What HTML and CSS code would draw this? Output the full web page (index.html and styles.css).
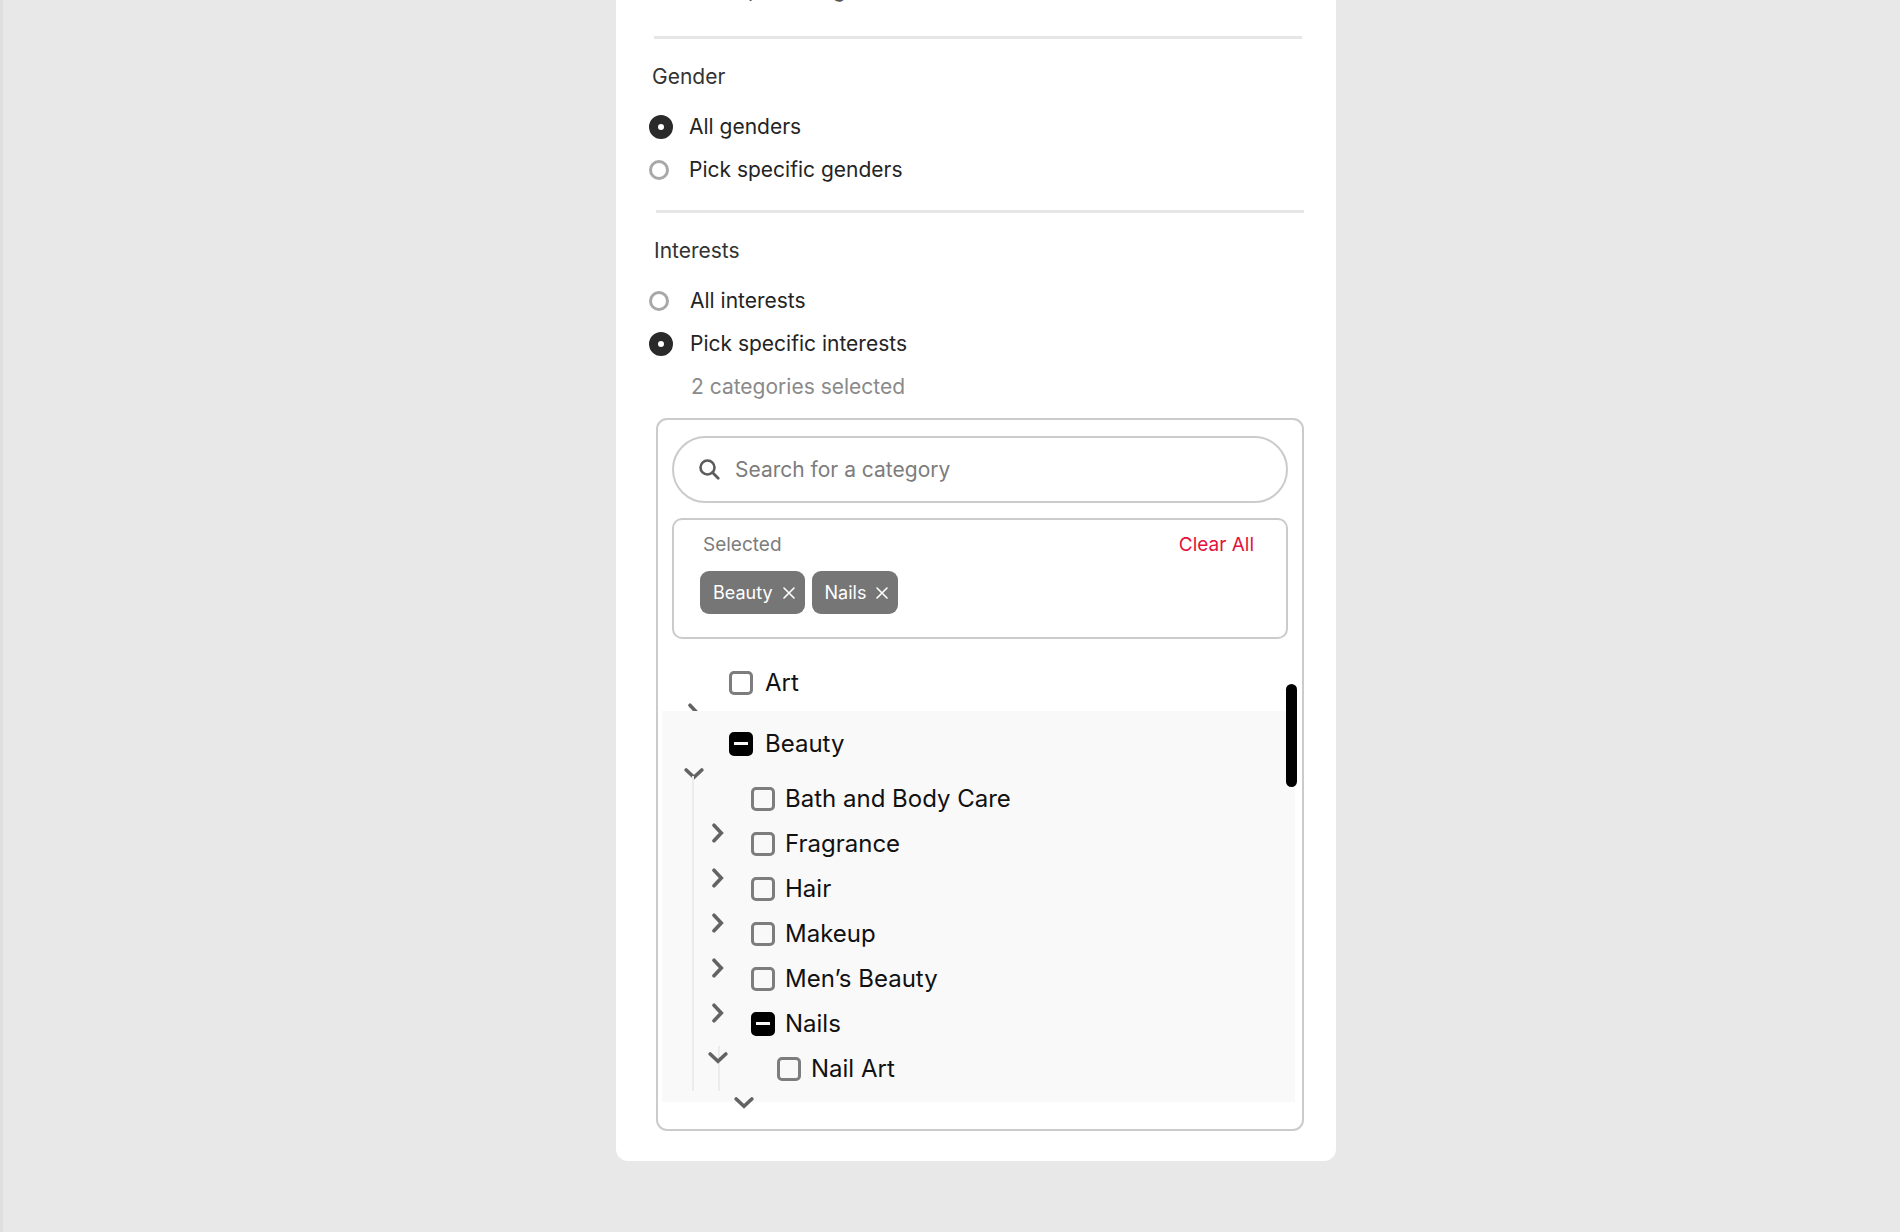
FILE: index.html
```html
<!DOCTYPE html>
<html lang="en">
<head>
<meta charset="utf-8">
<meta name="viewport" content="width=device-width, initial-scale=1">
<title>Audience targeting</title>
<link rel="stylesheet" href="styles.css">
</head>
<body>
<svg class="sprite" aria-hidden="true">
  <symbol id="chevron" viewBox="0 0 20 20"><path d="M6 2.200l7.300 7.800L6 17.800" fill="none" stroke="currentColor" stroke-width="3.600" stroke-linecap="round" stroke-linejoin="miter"/></symbol>
  <symbol id="close" viewBox="0 0 12 12"><path d="M1 1l10 10M11 1L1 11" fill="none" stroke="currentColor" stroke-width="1.600" stroke-linecap="round"/></symbol>
</svg>
<main class="card">
  <p class="clipped-option">Pick specific ages</p>

  <section class="group group-gender">
    <h2 class="group-title">Gender</h2>
    <label class="option"><input class="radio" type="radio" name="gender" checked><span>All genders</span></label>
    <label class="option"><input class="radio" type="radio" name="gender"><span>Pick specific genders</span></label>
  </section>

  <section class="group">
    <h2 class="group-title">Interests</h2>
    <label class="option"><input class="radio" type="radio" name="interests"><span>All interests</span></label>
    <label class="option"><input class="radio" type="radio" name="interests" checked><span>Pick specific interests</span></label>
    <p class="option option-note">2 categories selected</p>
  </section>

  <div class="picker">
    <label class="search">
      <svg class="search-icon" viewBox="0 0 21 21" aria-hidden="true"><circle cx="8.500" cy="8.500" r="7" fill="none" stroke="currentColor" stroke-width="2.600"/><path d="M13.500 13.500l5.700 5.700" stroke="currentColor" stroke-width="2.800" stroke-linecap="round"/></svg>
      <input class="search-input" type="text" placeholder="Search for a category" aria-label="Search for a category">
    </label>

    <div class="selected">
      <div class="selected-head">
        <span>Selected</span>
        <button class="clear" type="button">Clear All</button>
      </div>
      <div class="chips">
        <button class="chip" type="button">Beauty<svg class="chip-close" aria-hidden="true"><use href="#close"/></svg></button>
        <button class="chip" type="button">Nails<svg class="chip-close" aria-hidden="true"><use href="#close"/></svg></button>
      </div>
    </div>

    <ul class="tree">
      <li>
        <div class="row row-top">
          <button class="toggle" type="button" aria-label="Expand Art"><svg class="chevron"><use href="#chevron"/></svg></button>
          <label class="check-label"><input class="check" type="checkbox"><span>Art</span></label>
        </div>
      </li>
      <li class="open-branch">
        <div class="row row-top row-parent">
          <button class="toggle" type="button" aria-label="Collapse Beauty"><svg class="chevron down"><use href="#chevron"/></svg></button>
          <label class="check-label"><input class="check mixed" type="checkbox" aria-checked="mixed"><span>Beauty</span></label>
        </div>
        <ul class="branch">
          <li class="row">
            <button class="toggle" type="button" aria-label="Expand Bath and Body Care"><svg class="chevron"><use href="#chevron"/></svg></button>
            <label class="check-label"><input class="check" type="checkbox"><span>Bath and Body Care</span></label>
          </li>
          <li class="row">
            <button class="toggle" type="button" aria-label="Expand Fragrance"><svg class="chevron"><use href="#chevron"/></svg></button>
            <label class="check-label"><input class="check" type="checkbox"><span>Fragrance</span></label>
          </li>
          <li class="row">
            <button class="toggle" type="button" aria-label="Expand Hair"><svg class="chevron"><use href="#chevron"/></svg></button>
            <label class="check-label"><input class="check" type="checkbox"><span>Hair</span></label>
          </li>
          <li class="row">
            <button class="toggle" type="button" aria-label="Expand Makeup"><svg class="chevron"><use href="#chevron"/></svg></button>
            <label class="check-label"><input class="check" type="checkbox"><span>Makeup</span></label>
          </li>
          <li class="row">
            <button class="toggle" type="button" aria-label="Expand Men’s Beauty"><svg class="chevron"><use href="#chevron"/></svg></button>
            <label class="check-label"><input class="check" type="checkbox"><span>Men’s Beauty</span></label>
          </li>
          <li>
            <div class="row">
              <button class="toggle" type="button" aria-label="Collapse Nails"><svg class="chevron down"><use href="#chevron"/></svg></button>
              <label class="check-label"><input class="check mixed" type="checkbox" aria-checked="mixed"><span>Nails</span></label>
            </div>
            <ul class="branch-inner">
              <li class="row row-leaf">
                <button class="toggle" type="button" aria-label="Collapse Nail Art"><svg class="chevron down"><use href="#chevron"/></svg></button>
                <label class="check-label"><input class="check" type="checkbox"><span>Nail Art</span></label>
              </li>
            </ul>
          </li>
        </ul>
      </li>
    </ul>
    <div class="scroll-thumb"></div>
  </div>
</main>
</body>
</html>
```
FILE: styles.css
```css
* { box-sizing: border-box; }

html { background: #e8e8e8; overflow-x: hidden; }

body {
  margin: 0;
  min-height: 100vh;
  padding: 0 0 48px 49px;
  border-left: 3px solid #dedede;
  overflow: hidden;
  background: #e8e8e8;
  color: #242424;
  font-family: Inter, "Liberation Sans", sans-serif;
  font-size: 21px;
  line-height: 24px;
}

h2, p, ul { margin: 0; padding: 0; }
ul { list-style: none; }

button, input { font: inherit; color: inherit; }
button { border: 0; padding: 0; background: none; cursor: pointer; }

.sprite { position: absolute; width: 0; height: 0; }

.card {
  display: flex;
  flex-direction: column;
  width: 100%;
  max-width: 720px;
  margin: 0 auto;
  padding: 0 32px 30px 40px;
  border-radius: 0 0 12px 12px;
  background: #fff;
}

.clipped-option {
  margin: -22px 0 34px;
  padding-left: 33px;
  color: #555;
}

/* Radio groups */
.group {
  display: flex;
  flex-direction: column;
  padding-top: 26px;
  border-top: 3px solid #e6e6e6;
}

.group-gender { margin: 0 2px 19px -2px; }
.group-gender .option { margin-left: -5px; }

.group-title {
  margin-bottom: 16px;
  margin-left: -2px;
  font-size: 21px;
  font-weight: 400;
  color: #333;
}

.option {
  display: flex;
  align-items: center;
  min-height: 43px;
  margin-left: -7px;
}

.option span { margin-left: 21px; }
.option .radio:checked + span { margin-left: 17px; }
.group-gender .option span { margin-left: 20px; }
.group-gender .option .radio:checked + span { margin-left: 16px; }

.option-note { padding-left: 42px; color: #8a8a8a; }

.radio {
  appearance: none;
  flex: none;
  width: 20px;
  height: 20px;
  margin: 0;
  border: 3px solid #a8a8a8;
  border-radius: 50%;
  background: #fff;
}

.radio:checked {
  width: 24px;
  height: 24px;
  border: 9px solid #2a2a2a;
}

/* Category picker */
.picker {
  position: relative;
  display: flex;
  flex-direction: column;
  gap: 15px;
  margin-top: 10px;
  padding: 16px 14px 27px;
  border: 2px solid #cbcbcb;
  border-radius: 11px;
}

.search {
  display: flex;
  align-items: center;
  gap: 15px;
  height: 67px;
  padding: 0 25px;
  border: 2px solid #cbcbcb;
  border-radius: 34px;
}

.search-icon { flex: none; width: 21px; height: 21px; color: #5c5c5c; }

.search-input {
  flex: 1;
  min-width: 0;
  padding: 0;
  border: 0;
  outline: 0;
  background: none;
}

.search-input::placeholder { color: #7c7c7c; opacity: 1; }

.selected {
  display: flex;
  flex-direction: column;
  gap: 14px;
  padding: 13px 32px 23px 26px;
  border: 2px solid #cbcbcb;
  border-radius: 10px;
}

.selected-head {
  display: flex;
  justify-content: space-between;
  padding-left: 3px;
  font-size: 19px;
  color: #7c7c7c;
}

.clear { color: #e3123c; }

.chips { display: flex; flex-wrap: wrap; gap: 7px; }

.chip {
  display: flex;
  align-items: center;
  gap: 10px;
  height: 43px;
  padding: 0 10px 0 13px;
  border-radius: 9px;
  background: #767676;
  color: #fff;
  font-size: 18px;
}

.chip-close { width: 12px; height: 12px; }

/* Category tree */
.tree {
  margin: 0 -7px 0 -10px;
  font-size: 24px;
  color: #111;
}

.row {
  display: flex;
  align-items: center;
  gap: 23px;
  height: 45px;
  padding-left: 46px;
}

.row-top { gap: 25px; height: 57px; padding-left: 22px; }
.row-parent { height: 65px; }
.row-leaf { padding-left: 72px; }

/* Expanders hang below the line they belong to */
.toggle {
  flex: none;
  width: 20px;
  height: 20px;
  margin: 34px 0 -34px;
  color: #636363;
}

.row-top .toggle { margin: 30px 0 -30px; }

.chevron { display: block; width: 20px; height: 20px; }
.chevron.down { transform: rotate(90deg); }

.check-label { display: flex; align-items: center; gap: 10px; }
.row-top .check-label { gap: 12px; }

.check {
  appearance: none;
  display: grid;
  place-items: center;
  flex: none;
  width: 24px;
  height: 24px;
  margin: 0;
  border: 3px solid #7d7d7d;
  border-radius: 5px;
}

.check.mixed { border-color: #000; background: #000; }

.check.mixed::after {
  content: "";
  width: 14px;
  height: 3px;
  background: #f9f9f9;
}

.open-branch {
  position: relative;
  padding-bottom: 11px;
  background: #f9f9f9;
}

.branch { position: relative; z-index: 0; }
.branch-inner { position: relative; }

.branch::before,
.branch-inner::before {
  content: "";
  position: absolute;
  top: 0;
  bottom: 0;
  left: 30px;
  width: 2px;
  background: #ececec;
}

.branch-inner::before { left: 56px; z-index: -1; }

.scroll-thumb {
  position: absolute;
  top: 264px;
  right: 5px;
  width: 11px;
  height: 103px;
  border-radius: 6px;
  background: #000;
}
```
